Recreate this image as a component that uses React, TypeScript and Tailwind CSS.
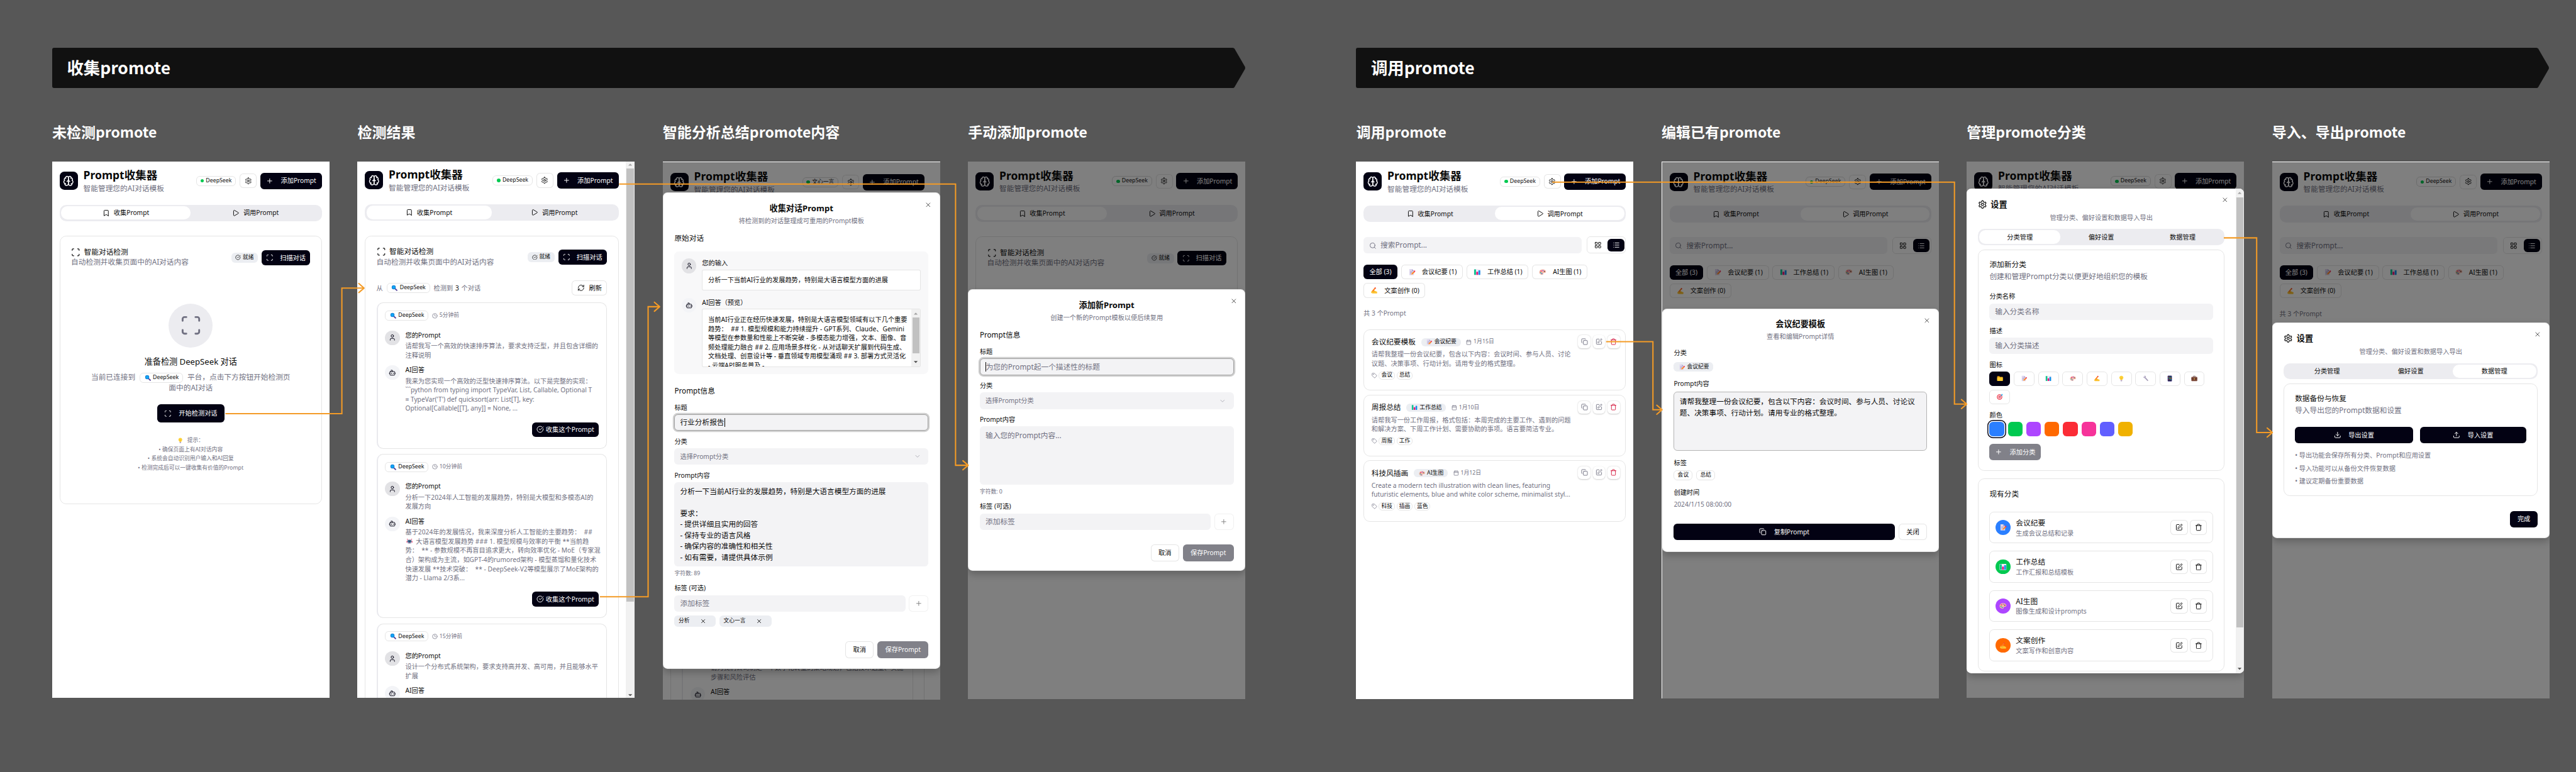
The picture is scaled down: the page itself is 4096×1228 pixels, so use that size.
import React from "react";
import {
  Bookmark,
  Bot,
  Calendar,
  ChevronDown,
  CircleCheckBig,
  Clock,
  Copy,
  Download,
  LayoutGrid,
  List,
  Play,
  Plus,
  RefreshCw,
  Scan,
  Search,
  SquarePen,
  Tag,
  Trash,
  Upload,
  User,
  X,
} from "lucide-react";

/* ---------- icons ---------- */

function BrainIcon({ className = "" }: { className?: string }) {
  return (
    <svg viewBox="0 0 24 24" fill="none" stroke="currentColor" strokeWidth="2" strokeLinecap="round" strokeLinejoin="round" className={className}>
      <path d="M12 5a3 3 0 1 0-5.997.125 4 4 0 0 0-2.526 5.77 4 4 0 0 0 .556 6.588A4 4 0 1 0 12 18Z" />
      <path d="M12 5a3 3 0 1 1 5.997.125 4 4 0 0 1 2.526 5.77 4 4 0 0 1-.556 6.588A4 4 0 1 1 12 18Z" />
      <path d="M15 13a4.5 4.5 0 0 1-3-4 4.5 4.5 0 0 1-3 4" />
      <path d="M17.599 6.5a3 3 0 0 0 .399-1.375" />
      <path d="M6.003 5.125A3 3 0 0 0 6.401 6.5" />
      <path d="M3.477 10.896a4 4 0 0 1 .585-.396" />
      <path d="M19.938 10.5a4 4 0 0 1 .585.396" />
      <path d="M6 18a4 4 0 0 1-1.967-.516" />
      <path d="M19.967 17.484A4 4 0 0 1 18 18" />
    </svg>
  );
}

function GearIcon({ className = "" }: { className?: string }) {
  return (
    <svg viewBox="0 0 24 24" fill="none" stroke="currentColor" strokeWidth="2" strokeLinecap="round" strokeLinejoin="round" className={className}>
      <path d="M12.22 2h-.44a2 2 0 0 0-2 2v.18a2 2 0 0 1-1 1.73l-.43.25a2 2 0 0 1-2 0l-.15-.08a2 2 0 0 0-2.73.73l-.22.38a2 2 0 0 0 .73 2.73l.15.1a2 2 0 0 1 1 1.72v.51a2 2 0 0 1-1 1.74l-.15.09a2 2 0 0 0-.73 2.73l.22.38a2 2 0 0 0 2.73.73l.15-.08a2 2 0 0 1 2 0l.43.25a2 2 0 0 1 1 1.73V20a2 2 0 0 0 2 2h.44a2 2 0 0 0 2-2v-.18a2 2 0 0 1 1-1.73l.43-.25a2 2 0 0 1 2 0l.15.08a2 2 0 0 0 2.73-.73l.22-.39a2 2 0 0 0-.73-2.73l-.15-.08a2 2 0 0 1-1-1.74v-.5a2 2 0 0 1 1-1.74l.15-.09a2 2 0 0 0 .73-2.73l-.22-.38a2 2 0 0 0-2.73-.73l-.15.08a2 2 0 0 1-2 0l-.43-.25a2 2 0 0 1-1-1.73V4a2 2 0 0 0-2-2z" />
      <circle cx="12" cy="12" r="3" />
    </svg>
  );
}

type EmojiName =
  | "magnifier"
  | "bulb"
  | "robot"
  | "memo"
  | "chart"
  | "palette"
  | "writing"
  | "folder"
  | "wrench"
  | "phone"
  | "briefcase"
  | "target";

const emojiArt: Record<EmojiName, React.ReactNode> = {
  magnifier: (
    <>
      <path d="M14 14l7 6.5" stroke="#5b4a9c" strokeWidth="4.6" strokeLinecap="round" />
      <circle cx="9.5" cy="9.5" r="7.6" fill="#1179cf" />
      <circle cx="9.5" cy="9.5" r="5.7" fill="#12a4f5" />
    </>
  ),
  bulb: (
    <>
      <path d="M12 1.5c-4.4 0-7.5 3.2-7.5 7.2 0 3.600 3 5.300 4 8.300h7c1-3 4-4.700 4-8.300 0-4-3.100-7.200-7.500-7.200z" fill="#fdd23a" />
      <path d="M9.500 9l2.500 2 2.500-2M12 11v6" stroke="#f0a81f" strokeWidth="1.300" fill="none" />
      <path d="M9 17.500h6v3.500c0 1-1 1.600-3 1.600s-3-.6-3-1.600z" fill="#b5a3c4" />
    </>
  ),
  robot: (
    <>
      <rect x="1" y="10" width="3" height="7" rx="1.500" fill="#f0315a" />
      <rect x="20" y="10" width="3" height="7" rx="1.500" fill="#f0315a" />
      <circle cx="4" cy="4" r="1.700" fill="#f0315a" />
      <circle cx="20" cy="4" r="1.700" fill="#f0315a" />
      <rect x="3.500" y="4.500" width="17" height="16" rx="5" fill="#b9b3cf" />
      <rect x="5" y="8.500" width="14" height="7" rx="3.500" fill="#1c2140" />
      <circle cx="9" cy="12" r="1.900" fill="#1fc3ef" />
      <circle cx="15" cy="12" r="1.900" fill="#1fc3ef" />
      <rect x="8" y="17" width="8" height="1.800" rx=".9" fill="#5a5480" />
    </>
  ),
  memo: (
    <>
      <path d="M4 2h9l6 6v14H4z" fill="#ded6ee" />
      <path d="M13 2l6 6h-6z" fill="#a99bc9" />
      <path d="M6.500 10h8M6.500 13.500h6M6.500 17h4" stroke="#9c8fb8" strokeWidth="1.300" />
      <path d="M9.500 20.500l1.200-4.200L18 9.300l3.400 3.400-7.200 7z" fill="#ff8a2b" />
      <path d="M18 9.300l2-1.900c1-.9 2.200-.7 3 .2s.7 2-.1 2.900l-1.900 2.200z" fill="#f0315a" />
      <path d="M9.500 20.500l1.200-4.200 3.500 3.400z" fill="#f7c9a0" />
    </>
  ),
  chart: (
    <>
      <rect x="1" y="2" width="22" height="20" rx="1.500" fill="#efeaf7" />
      <rect x="2" y="3" width="6" height="18" rx=".8" fill="#0fc58e" />
      <rect x="9" y="11" width="6" height="10" rx=".8" fill="#ee1478" />
      <rect x="16" y="6" width="6" height="15" rx=".8" fill="#1591e8" />
    </>
  ),
  palette: (
    <>
      <path d="M12 3C5.700 3 1 7 1 12.300c0 5 4.300 8.700 10 8.700 2.600 0 3.400-1.400 3-3-.5-2 .6-3.300 2.700-3.200 3.400.2 6.300-.8 6.300-4.400C23 6 18 3 12 3z" fill="#f7b9a8" />
      <circle cx="7" cy="8.500" r="2" fill="#ed2466" />
      <circle cx="5.500" cy="13.500" r="1.900" fill="#12b28c" />
      <circle cx="9.500" cy="17" r="1.900" fill="#1a7fe0" />
      <circle cx="13" cy="6.800" r="1.900" fill="#8b4ae0" />
      <circle cx="18" cy="9.500" r="1.900" fill="#5c3b34" />
    </>
  ),
  writing: (
    <>
      <path d="M2.500 17.500c1-3 4-6 7-5.500l4 1 8 3.500c1.700.9 1.200 2.700-.6 2.700l1 .2c1 1.700-.3 2.700-2 2.600H8c-3.500 0-6.500-1.700-5.500-4.500z" fill="#fdc432" />
      <path d="M5.500 16.500L7 12 15.200 1.800l3.200 2.600L10 14.500z" fill="#ff7a1f" />
      <path d="M15.200 1.800l3.200 2.600-1.400 1.700-3.200-2.600z" fill="#e8304a" />
      <path d="M8 17c2.500.5 5-.5 6.500-2.500" stroke="#e89a17" strokeWidth="1.400" fill="none" />
    </>
  ),
  folder: (
    <>
      <path d="M1.500 4.500C1.500 3.700 2 3 3 3h6.500L12 6h9c1 0 1.500.6 1.500 1.500V20H1.500z" fill="#e39a12" />
      <rect x="1.500" y="7.500" width="21" height="13.500" rx="1.500" fill="#fdc92f" />
    </>
  ),
  wrench: (
    <>
      <path d="M7 7l11.500 12" stroke="#a79fb8" strokeWidth="4.200" strokeLinecap="round" />
      <path d="M2 5.500l3.500 1 2-2L6.200 1.300c4-.8 6.800 2.400 5.600 5.800-1 3.200-5 4.200-7.600 2.500C2.700 8.600 2 7.200 2 5.500z" fill="#b8b0c8" />
    </>
  ),
  phone: (
    <>
      <rect x="4" y="1" width="16" height="22" rx="2.500" fill="#4b3f8a" />
      <rect x="5.500" y="3" width="13" height="17.500" rx="1" fill="#1c1b3a" />
      {[5, 9.500, 14].map((y, r) => (
        <g key={y}>
          <rect x="6.800" y={y} width="2.900" height="3" rx=".6" fill={["#ff8a2b", "#1fc3ef", "#f0315a"][r]} />
          <rect x="10.600" y={y} width="2.900" height="3" rx=".6" fill={["#1a7fe0", "#fdc432", "#12b28c"][r]} />
          <rect x="14.400" y={y} width="2.900" height="3" rx=".6" fill={["#12b28c", "#ff8a2b", "#1fc3ef"][r]} />
        </g>
      ))}
    </>
  ),
  briefcase: (
    <>
      <path d="M8 6V4.500C8 3.500 8.600 3 9.500 3h5c.9 0 1.500.5 1.500 1.500V6" stroke="#4a2c28" strokeWidth="1.800" fill="none" />
      <rect x="1" y="6" width="22" height="15.500" rx="2" fill="#7d4a3a" />
      <path d="M1 12h22v2c-6 2-16 2-22 0z" fill="#5c332b" />
      <rect x="10" y="11.500" width="4" height="3.500" rx=".8" fill="#f5c03a" />
    </>
  ),
  target: (
    <>
      <circle cx="10.500" cy="13" r="10" fill="#ee3346" />
      <circle cx="10.500" cy="13" r="7.200" fill="#fff" />
      <circle cx="10.500" cy="13" r="4.700" fill="#ee3346" />
      <circle cx="10.500" cy="13" r="2" fill="#fff" />
      <path d="M10.500 13l8-7.500" stroke="#2b6cb5" strokeWidth="1.600" />
      <path d="M16 8l.4-4L20 .8l.6 2.700 2.900.5L20 7.600z" fill="#35b6ef" />
    </>
  ),
};

function Emoji({ name, className = "size-4" }: { name: EmojiName; className?: string }) {
  return (
    <svg viewBox="0 0 24 24" fill="none" className={"shrink-0 " + className}>
      {emojiArt[name]}
    </svg>
  );
}

/* ---------- small parts ---------- */

function EmojiBadge({ emoji, children, outline = false }: { emoji: EmojiName; children: React.ReactNode; outline?: boolean }) {
  return (
    <span
      className={
        "inline-flex shrink-0 items-center rounded-lg border pr-2 pl-[9px] text-xs leading-4 text-[#0a0a0a] " +
        (outline ? "h-[22px] border-black/10" : "h-[18px] border-transparent bg-[#eceef2]")
      }
    >
      <Emoji name={emoji} className="mr-[4.500px] size-[14px]" />
      {children}
    </span>
  );
}

function PrimaryButton({ className = "", children }: { className?: string; children: React.ReactNode }) {
  return (
    <button className={"flex shrink-0 items-center justify-center rounded-lg bg-[#030213] text-sm text-white " + className}>{children}</button>
  );
}

function OutlineButton({ className = "", children }: { className?: string; children: React.ReactNode }) {
  return (
    <button className={"flex shrink-0 items-center justify-center rounded-lg border border-black/10 bg-white text-sm text-[#0a0a0a] " + className}>
      {children}
    </button>
  );
}

function AppHeader({ platform = "DeepSeek", tab, dim = false }: { platform?: string; tab: "collect" | "use"; dim?: boolean }) {
  const on = "bg-white";
  return (
    <header className="px-4">
      <div className="flex h-14 items-center">
        <div className="flex size-10 items-center justify-center rounded-[10px] bg-[#030213] text-white">
          <BrainIcon className="size-6" />
        </div>
        <div className="ml-3">
          <h1 className="text-2xl leading-8 font-bold whitespace-nowrap">Prompt收集器</h1>
          <p className="text-base leading-6 whitespace-nowrap text-[#717182]">智能管理您的AI对话模板</p>
        </div>
        <div className="ml-auto flex items-center gap-2">
          <span className={"flex h-[22px] items-center gap-1 rounded-lg border px-2 text-xs " + (dim ? "border-black/15" : "border-black/10")}>
            <i className="h-[7.500px] w-2 rounded-full bg-[#00c950]" />
            {platform}
          </span>
          <OutlineButton className="h-8 w-[37px]">
            <GearIcon className="size-4" />
          </OutlineButton>
          <PrimaryButton className="h-[35.500px] w-[134px] gap-4">
            <Plus className="size-4" />
            添加Prompt
          </PrimaryButton>
        </div>
      </div>
      <div className="mt-6 flex h-9 rounded-[14px] bg-[#ececf0] p-[3.500px] text-sm">
        <div className={"flex flex-1 items-center justify-center gap-2 rounded-[14px] " + (tab === "collect" ? on : "")}>
          <Bookmark className="size-4" />
          收集Prompt
        </div>
        <div className={"flex flex-1 items-center justify-center gap-2 rounded-[14px] " + (tab === "use" ? on : "")}>
          <Play className="size-4" />
          调用Prompt
        </div>
      </div>
    </header>
  );
}

function DetectHeader() {
  return (
    <div className="flex items-center justify-between">
      <div>
        <div className="flex h-5 items-center gap-2 text-base leading-5">
          <Scan className="size-5" />
          智能对话检测
        </div>
        <p className="text-base leading-6 whitespace-nowrap text-[#717182]">自动检测并收集页面中的AI对话内容</p>
      </div>
      <div className="flex items-center gap-2">
        <span className="flex h-[22px] items-center gap-1 rounded-lg bg-[#eceef2] px-[9px] text-xs">
          <CircleCheckBig className="size-3" />
          就绪
        </span>
        <PrimaryButton className="h-8 w-[106px] gap-[14px]">
          <Scan className="size-4" />
          扫描对话
        </PrimaryButton>
      </div>
    </div>
  );
}

function Avatar({ kind }: { kind: "user" | "bot" }) {
  return (
    <span
      className={
        "flex size-8 shrink-0 items-center justify-center rounded-full text-[#030213] " + (kind === "user" ? "bg-[#e2e2e5]" : "bg-[#f3f4f7]")
      }
    >
      {kind === "user" ? <User className="size-4" /> : <Bot className="size-4" />}
    </span>
  );
}

function Lines({ lines }: { lines: React.ReactNode[] }) {
  return (
    <>
      {lines.map((l, i) => (
        <div key={i} className="whitespace-pre">
          {l}
        </div>
      ))}
    </>
  );
}

function Conversation({ time, prompt, answer }: { time: string; prompt: string[]; answer: React.ReactNode[] }) {
  return (
    <article className="rounded-[14px] border border-l-4 border-black/10 border-l-[#e9e9ee] bg-white px-4 pt-4 pb-6">
      <div className="flex h-[22px] items-center gap-2 text-xs text-[#717182]">
        <EmojiBadge emoji="magnifier" outline>
          DeepSeek
        </EmojiBadge>
        <span className="flex items-center gap-1">
          <Clock className="size-3" />
          {time}
        </span>
      </div>
      <div className="mt-[21px] flex gap-3 text-sm">
        <Avatar kind="user" />
        <div>
          <div>您的Prompt</div>
          <div className="mt-1 text-[#717182]">
            <Lines lines={prompt} />
          </div>
        </div>
      </div>
      <div className="mt-3 flex gap-3 text-sm">
        <Avatar kind="bot" />
        <div>
          <div>AI回答</div>
          <div className="mt-1 text-[#717182]">
            <Lines lines={answer} />
          </div>
        </div>
      </div>
      <div className="mt-5 flex justify-end">
        <PrimaryButton className="h-8 w-[146px] gap-1">
          <CircleCheckBig className="size-4" />
          收集这个Prompt
        </PrimaryButton>
      </div>
    </article>
  );
}

function ScrollArrow({ dir, className = "" }: { dir: "up" | "down"; className?: string }) {
  return (
    <svg viewBox="0 0 10 6" className={"w-[8.500px] " + className}>
      {dir === "up" ? <path d="M5 0.500L10 5.500H0z" fill="#a3a3a3" /> : <path d="M5 5.500L0 .5h10z" fill="#505050" />}
    </svg>
  );
}

/* ---------- frame of one screen ---------- */

function Screen({
  title,
  className,
  overlay = false,
  children,
  dialog,
}: {
  title: string;
  className: string;
  overlay?: boolean;
  children: React.ReactNode;
  dialog?: React.ReactNode;
}) {
  return (
    <div className="w-[440.700px] shrink-0">
      <h2 className="flex h-[36px] items-center text-[23px] leading-none font-bold whitespace-nowrap text-white font-['Noto_Sans_CJK_SC','Noto_Sans',sans-serif]">
        {title}
      </h2>
      <div className="mt-[40.400px] [zoom:0.7309]">
        <div className={"relative flex w-[603px] flex-col overflow-hidden bg-white text-[#0a0a0a] " + className}>
          {children}
          {overlay && <div className="absolute inset-0 bg-black/50" />}
          {dialog}
        </div>
      </div>
    </div>
  );
}

function Dialog({ className, children }: { className: string; children: React.ReactNode }) {
  return (
    <div
      className={
        "absolute left-0 w-full overflow-hidden rounded-[10px] border border-black/10 bg-white px-6 pt-6 shadow-[0_8px_16px_rgba(0,0,0,0.22)] " + className
      }
    >
      {children}
    </div>
  );
}

function DialogTitle({ title, text }: { title: string; text: string }) {
  return (
    <>
      <X className="absolute top-[16.500px] right-4 size-4 opacity-70" />
      <div className="text-center text-lg leading-[18px] font-bold">{title}</div>
      <p className="mt-2 text-center text-sm leading-5 text-[#717182]">{text}</p>
    </>
  );
}

/* ---------- form shared by both prompt dialogs ---------- */

function FormLabel({ children, className = "mt-4" }: { children: React.ReactNode; className?: string }) {
  return <div className={"text-sm leading-[14px] " + className}>{children}</div>;
}

function PromptForm({
  titleField,
  content,
  contentHeight,
  count,
  tags,
}: {
  titleField: React.ReactNode;
  content: React.ReactNode;
  contentHeight: string;
  count: number;
  tags?: string[];
}) {
  return (
    <>
      <div className="text-base leading-6">Prompt信息</div>
      <FormLabel className="mt-[17px]">标题</FormLabel>
      <div className="mt-2 flex h-9 items-center rounded-lg border border-[#a1a1a1] bg-[#f3f3f5] px-[11px] text-base leading-6 ring-[3px] ring-[#d0d0d0]">
        {titleField}
      </div>
      <FormLabel>分类</FormLabel>
      <div className="mt-2 flex h-9 items-center justify-between rounded-lg bg-[#f3f3f5] pr-3 pl-[12.500px] text-sm text-[#717182]">
        选择Prompt分类
        <ChevronDown className="mr-1 size-4 opacity-50" />
      </div>
      <FormLabel>Prompt内容</FormLabel>
      <div className={"mt-2 rounded-lg bg-[#f3f3f5] px-[12.500px] pt-2 text-base leading-6 " + contentHeight}>{content}</div>
      <div className="mt-2 text-xs leading-4 text-[#717182]">字符数: {count}</div>
      <FormLabel>标签 (可选)</FormLabel>
      <div className="mt-2 flex gap-2">
        <div className="flex h-9 flex-1 items-center rounded-lg bg-[#f3f3f5] px-[12.500px] text-base leading-6 text-[#717182]">添加标签</div>
        <OutlineButton className="h-9 w-[42px] opacity-50">
          <Plus className="size-4" />
        </OutlineButton>
      </div>
      {tags && (
        <div className="mt-2 flex gap-2">
          {tags.map((t) => (
            <span key={t} className="flex h-[25px] items-center rounded-lg bg-[#eceef2] pr-5 pl-[9px] text-xs">
              {t}
              <X className="ml-[23px] size-[14px]" />
            </span>
          ))}
        </div>
      )}
      <div className="mt-8 flex justify-end gap-2">
        <OutlineButton className="h-9 w-[62px]">取消</OutlineButton>
        <button className="h-9 w-[110.500px] rounded-lg bg-[#818189] text-sm text-white">保存Prompt</button>
      </div>
    </>
  );
}

/* ---------- library view (search, filters, cards) ---------- */

const filters: { emoji: EmojiName; label: string }[] = [
  { emoji: "memo", label: "会议纪要 (1)" },
  { emoji: "chart", label: "工作总结 (1)" },
  { emoji: "palette", label: "AI生图 (1)" },
  { emoji: "writing", label: "文案创作 (0)" },
];

function LibraryTop() {
  return (
    <div className="px-4 pt-8">
      <div className="flex h-[37px] items-center justify-between">
        <div className="flex h-9 w-[474px] items-center rounded-lg bg-[#f3f3f5] pl-3 text-base text-[#717182]">
          <Search className="mt-[2px] mr-[9px] size-4" />
          搜索Prompt...
        </div>
        <div className="flex h-[37px] w-[85px] items-center rounded-lg border border-black/10 pl-1">
          <span className="flex h-7 w-[36px] items-center justify-center">
            <LayoutGrid className="size-4" />
          </span>
          <PrimaryButton className="ml-1 h-7 w-[36px]">
            <List className="size-4" />
          </PrimaryButton>
        </div>
      </div>
      <div className="mt-6 flex flex-wrap gap-x-2 gap-y-[8.500px]">
        <PrimaryButton className="h-8 w-[73.500px]">全部 (3)</PrimaryButton>
        {filters.map((f) => (
          <OutlineButton key={f.label} className="h-8 px-3">
            <Emoji name={f.emoji} className="mr-[14px] ml-[2px] size-4" />
            {f.label}
          </OutlineButton>
        ))}
      </div>
      <div className="mt-6 text-sm text-[#717182]">共 3 个Prompt</div>
    </div>
  );
}

const prompts: { name: string; emoji: EmojiName; cat: string; date: string; lines: string[]; tags: string[] }[] = [
  {
    name: "会议纪要模板",
    emoji: "memo",
    cat: "会议纪要",
    date: "1月15日",
    lines: ["请帮我整理一份会议纪要，包含以下内容：会议时间、参与人员、讨论", "议题、决策事项、行动计划。请用专业的格式整理。"],
    tags: ["会议", "总结"],
  },
  {
    name: "周报总结",
    emoji: "chart",
    cat: "工作总结",
    date: "1月10日",
    lines: ["请帮我写一份工作周报，格式包括：本周完成的主要工作、遇到的问题", "和解决方案、下周工作计划、需要协助的事项。语言要简洁专业。"],
    tags: ["周报", "工作"],
  },
  {
    name: "科技风插画",
    emoji: "palette",
    cat: "AI生图",
    date: "1月12日",
    lines: ["Create a modern tech illustration with clean lines, featuring", "futuristic elements, blue and white color scheme, minimalist styl..."],
    tags: ["科技", "插画", "蓝色"],
  },
];

function IconChip({ children, className = "text-[#717182]" }: { children: React.ReactNode; className?: string }) {
  return (
    <span className={"flex h-7 w-[27px] items-center justify-center rounded-lg bg-white shadow-[0_1px_3px_rgba(0,0,0,0.22)] " + className}>
      {children}
    </span>
  );
}

function PromptCard({ p }: { p: (typeof prompts)[number] }) {
  return (
    <article className="relative h-[134px] rounded-[14px] border border-black/10 px-4 pt-4">
      <div className="flex h-[22px] items-center gap-3">
        <span className="text-base leading-[22px]">{p.name}</span>
        <EmojiBadge emoji={p.emoji}>{p.cat}</EmojiBadge>
        <span className="flex items-center gap-1 text-xs text-[#717182]">
          <Calendar className="size-3" />
          {p.date}
        </span>
      </div>
      <div className="mt-[5.500px] text-sm text-[#717182]">
        <Lines lines={p.lines} />
      </div>
      <div className="mt-[7px] flex h-[18px] items-center gap-1 text-xs">
        <Tag className="size-3 text-[#717182]" />
        {p.tags.map((t) => (
          <span key={t} className="flex h-[17.500px] items-center rounded-lg border border-black/10 px-1">
            {t}
          </span>
        ))}
      </div>
      <div className="absolute top-3 right-3 flex gap-[5px]">
        <IconChip>
          <Copy className="size-[15px]" />
        </IconChip>
        <IconChip>
          <SquarePen className="size-[15px]" />
        </IconChip>
        <IconChip className="text-[#d4183d]">
          <Trash className="size-[15px]" />
        </IconChip>
      </div>
    </article>
  );
}

/* ---------- settings dialog parts ---------- */

function SettingsTop({ active }: { active: number }) {
  return (
    <>
      <X className="absolute top-[16.500px] right-4 size-4 opacity-70" />
      <div className="flex h-5 items-center gap-2 text-lg leading-5 font-bold">
        <GearIcon className="size-5" />
        设置
      </div>
      <p className="mt-[9px] text-center text-sm leading-5 text-[#717182]">管理分类、偏好设置和数据导入导出</p>
      <div className="mt-[14.500px] flex h-[35.500px] rounded-[14px] bg-[#ececf0] p-[3px] text-sm">
        {["分类管理", "偏好设置", "数据管理"].map((t, i) => (
          <div key={t} className={"flex flex-1 items-center justify-center rounded-[14px] " + (i === active ? "bg-white" : "")}>
            {t}
          </div>
        ))}
      </div>
    </>
  );
}

const categories: { emoji: EmojiName; name: string; desc: string; color: string }[] = [
  { emoji: "memo", name: "会议纪要", desc: "生成会议总结和记录", color: "bg-[#2b7fff]" },
  { emoji: "chart", name: "工作总结", desc: "工作汇报和总结模板", color: "bg-[#00c950]" },
  { emoji: "palette", name: "AI生图", desc: "图像生成和设计prompts", color: "bg-[#ad46ff]" },
  { emoji: "writing", name: "文案创作", desc: "文案写作和创意内容", color: "bg-[#ff6900]" },
];

const iconChoices: EmojiName[] = ["folder", "memo", "chart", "palette", "writing", "bulb", "wrench", "phone", "briefcase", "target"];

const swatches = [
  "bg-[#2b7fff] ring-2 ring-[#030213] ring-offset-2",
  "bg-[#00c950]",
  "bg-[#ad46ff]",
  "bg-[#ff6900]",
  "bg-[#fb2c36]",
  "bg-[#f6339a]",
  "bg-[#615fff]",
  "bg-[#f0b100]",
];

/* ---------- screens ---------- */

function IdleScreen() {
  return (
    <Screen title="未检测promote" className="h-[1168px] pt-[14.500px]">
      <AppHeader tab="collect" />
      <section className="mx-4 mt-8 h-[584px] rounded-[14px] border border-black/10 p-6">
        <DetectHeader />
        <div className="flex flex-col items-center pt-[78px]">
          <div className="flex size-24 items-center justify-center rounded-full bg-[#ececf0] text-[#717182]">
            <Scan className="size-12" />
          </div>
          <div className="mt-4 text-lg leading-7">准备检测 DeepSeek 对话</div>
          <div className="mt-[7px] flex items-center text-base leading-6 text-[#717182]">
            <span>当前已连接到</span>
            <span className="mx-[9.500px] mt-1 flex">
              <EmojiBadge emoji="magnifier" outline>
                DeepSeek
              </EmojiBadge>
            </span>
            <span>平台，点击下方按钮开始检测页</span>
          </div>
          <div className="-mt-[2px] text-base leading-6 text-[#717182]">面中的AI对话</div>
          <PrimaryButton className="mt-6 h-10 w-[147px] gap-4">
            <Scan className="size-4" />
            开始检测对话
          </PrimaryButton>
          <div className="mt-[31px] flex flex-col items-center gap-[4.200px] text-xs leading-4 text-[#717182]">
            <span className="flex items-center gap-2">
              <Emoji name="bulb" className="size-[13px]" />
              提示：
            </span>
            <span>• 确保页面上有AI对话内容</span>
            <span>• 系统会自动识别用户输入和AI回复</span>
            <span>• 检测完成后可以一键收集有价值的Prompt</span>
          </div>
        </div>
      </section>
    </Screen>
  );
}

function ResultScreen() {
  return (
    <Screen title="检测结果" className="h-[1168px]">
      <div className="flex h-full">
        <div className="h-full w-[584px] shrink-0 overflow-hidden pt-[13.500px]">
          <AppHeader tab="collect" />
          <section className="mx-4 mt-8 h-[1300px] rounded-[14px] border border-black/10 p-6">
            <DetectHeader />
            <div className="mt-[29px] flex h-8 items-center gap-2 text-sm text-[#717182]">
              从
              <EmojiBadge emoji="magnifier" outline>
                DeepSeek
              </EmojiBadge>
              <span>
                检测到 <span className="mx-[1.500px] text-[#0a0a0a]">3</span> 个对话
              </span>
              <OutlineButton className="ml-auto h-8 w-[76px] gap-[10px]">
                <RefreshCw className="size-4" />
                刷新
              </OutlineButton>
            </div>
            <div className="mt-4 flex flex-col gap-[11.500px]">
              <Conversation
                time="5分钟前"
                prompt={["请帮我写一个高效的快速排序算法，要求支持泛型，并且包含详细的", "注释说明"]}
                answer={[
                  "我来为您实现一个高效的泛型快速排序算法。以下是完整的实现：",
                  "```python from typing import TypeVar, List, Callable, Optional T",
                  "= TypeVar('T') def quicksort(arr: List[T], key:",
                  "Optional[Callable[[T], any]] = None, ...",
                ]}
              />
              <Conversation
                time="10分钟前"
                prompt={["分析一下2024年人工智能的发展趋势，特别是大模型和多模态AI的", "发展方向"]}
                answer={[
                  "基于2024年的发展情况，我来深度分析人工智能的主要趋势：  ##",
                  <span key="r" className="flex items-center">
                    <Emoji name="robot" className="mr-[7px] ml-[2px] size-[14px]" />
                    大语言模型发展趋势 ### 1. 模型规模与效率的平衡 **当前趋
                  </span>,
                  "势：  ** - 参数规模不再盲目追求更大，转向效率优化 - MoE（专家混",
                  "合）架构成为主流，如GPT-4的rumored架构 - 模型蒸馏和量化技术",
                  "快速发展 **技术突破：  ** - DeepSeek-V2等模型展示了MoE架构的",
                  "潜力 - Llama 2/3系...",
                ]}
              />
              <Conversation
                time="15分钟前"
                prompt={["设计一个分布式系统架构，要求支持高并发、高可用，并且能够水平", "扩展"]}
                answer={["", "", "", ""]}
              />
            </div>
          </section>
        </div>
        <div className="flex w-[19px] flex-col items-center bg-[#f1f1f1] pt-[5px] pb-1">
          <ScrollArrow dir="up" />
          <div className="mt-[6px] h-[942px] w-4 bg-[#c1c1c1]" />
          <ScrollArrow dir="down" className="mt-auto" />
        </div>
      </div>
    </Screen>
  );
}

function AnalyzeScreen() {
  return (
    <Screen
      title="智能分析总结promote内容"
      className="h-[1172.500px] border-t-2 border-white pt-[16px]"
      overlay
      dialog={
        <Dialog className="top-[67px] h-[1037px]">
          <DialogTitle title="收集对话Prompt" text="将检测到的对话整理成可重用的Prompt模板" />
          <div className="mt-4 text-base leading-6">原始对话</div>
          <div className="mt-4 mb-6 h-[267.500px] rounded-[10px] bg-[#f8f8f9] p-4 text-sm">
            <div className="flex gap-3">
              <Avatar kind="user" />
              <div className="flex-1">
                <div>您的输入</div>
                <div className="mt-1 flex h-[45.500px] items-center rounded-[4px] border border-black/10 bg-white pl-3">
                  分析一下当前AI行业的发展趋势，特别是大语言模型方面的进展
                </div>
              </div>
            </div>
            <div className="mt-4 flex gap-3">
              <Avatar kind="bot" />
              <div className="flex-1">
                <div>AI回答（预览）</div>
                <div className="mt-1 flex h-[127px] justify-between overflow-hidden rounded-[4px] border border-black/10 bg-white pl-3">
                  <div className="pt-3">
                    <Lines
                      lines={[
                        "当前AI行业正在经历快速发展，特别是大语言模型领域有以下几个重要",
                        "趋势：  ## 1. 模型规模和能力持续提升 - GPT系列、Claude、Gemini",
                        "等模型在参数量和性能上不断突破 - 多模态能力增强，文本、图像、音",
                        "频处理能力融合 ## 2. 应用场景多样化 - 从对话聊天扩展到代码生成、",
                        "文档处理、创意设计等 - 垂直领域专用模型涌现 ## 3. 部署方式灵活化",
                        "- 云端API服务普及 - ...",
                      ]}
                    />
                  </div>
                  <div className="flex w-[19px] shrink-0 flex-col items-center bg-[#f1f1f1] pt-[7px] pb-[7px]">
                    <ScrollArrow dir="up" />
                    <div className="mt-[6px] h-[78px] w-4 bg-[#c1c1c1]" />
                    <ScrollArrow dir="down" className="mt-auto" />
                  </div>
                </div>
              </div>
            </div>
          </div>
          <PromptForm
            titleField={
              <>
                行业分析报告
                <i className="h-5 w-px bg-black" />
              </>
            }
            content={
              <Lines
                lines={[
                  "分析一下当前AI行业的发展趋势，特别是大语言模型方面的进展",
                  " ",
                  "要求：",
                  "- 提供详细且实用的回答",
                  "- 保持专业的语言风格",
                  "- 确保内容的准确性和相关性",
                  "- 如有需要，请提供具体示例",
                ]}
              />
            }
            contentHeight="h-[184px]"
            count={89}
            tags={["分析", "文心一言"]}
          />
        </Dialog>
      }
    >
      <div className="w-[585px]">
        <AppHeader tab="collect" platform="文心一言" dim />
      </div>
      <div className="mt-auto ml-4 w-[553px] border-x border-black/10">
        <div className="ml-6 w-[503px] border-x border-l-4 border-black/10 border-l-[#ececf0] pl-4 text-sm text-[#717182]">
          <div className="ml-11 whitespace-nowrap">
            请为我们公司制定一个数字化转型的策略规划，包括技术选型、实施
            <br />
            步骤和风险评估
          </div>
          <div className="mt-3 flex h-[28px] gap-3 text-[#0a0a0a]">
            <Avatar kind="bot" />
            AI回答
          </div>
        </div>
      </div>
    </Screen>
  );
}

function AddScreen() {
  return (
    <Screen
      title="手动添加promote"
      className="h-[1170px] pt-[15.500px]"
      overlay
      dialog={
        <Dialog className="top-[279px] h-[613px]">
          <DialogTitle title="添加新Prompt" text="创建一个新的Prompt模板以便后续复用" />
          <div className="mt-4">
            <PromptForm
              titleField={
                <>
                  <i className="h-5 w-px bg-black" />
                  <span className="text-[#717182]">为您的Prompt起一个描述性的标题</span>
                </>
              }
              content={<span className="text-[#717182]">输入您的Prompt内容...</span>}
              contentHeight="h-[127px]"
              count={0}
            />
          </div>
        </Dialog>
      }
    >
      <AppHeader tab="collect" dim />
      <section className="mx-4 mt-8 h-[584px] rounded-[14px] border border-black/10 p-6">
        <DetectHeader />
      </section>
    </Screen>
  );
}

function LibraryScreen() {
  return (
    <Screen title="调用promote" className="h-[1170px] pt-4">
      <AppHeader tab="use" />
      <LibraryTop />
      <div className="mx-4 mt-6 flex flex-col gap-[8.600px]">
        {prompts.map((p) => (
          <PromptCard key={p.name} p={p} />
        ))}
      </div>
    </Screen>
  );
}

function EditScreen() {
  return (
    <Screen
      title="编辑已有promote"
      className="h-[1169px] border-t-2 border-l border-white pt-[15.500px]"
      overlay
      dialog={
        <Dialog className="top-[319px] h-[530px]">
          <DialogTitle title="会议纪要模板" text="查看和编辑Prompt详情" />
          <FormLabel className="mt-[18px]">分类</FormLabel>
          <div className="mt-[14px] flex h-5 w-[85px] items-center rounded-lg bg-[#eceef2]">
            <EmojiBadge emoji="memo">会议纪要</EmojiBadge>
          </div>
          <FormLabel className="mt-[19px]">Prompt内容</FormLabel>
          <div className="mt-[11px] h-[128px] rounded-lg border-[1.500px] border-[#b4b4b4] bg-[#f3f3f5] px-[11.500px] pt-[8px] text-base leading-6">
            <Lines lines={["请帮我整理一份会议纪要，包含以下内容：会议时间、参与人员、讨论议", "题、决策事项、行动计划。请用专业的格式整理。"]} />
          </div>
          <FormLabel className="mt-[19px]">标签</FormLabel>
          <div className="mt-[9.500px] flex gap-2 text-xs">
            {["会议", "总结"].map((t) => (
              <span key={t} className="flex h-[22px] w-[41px] items-center justify-center rounded-lg border border-black/10">
                {t}
              </span>
            ))}
          </div>
          <FormLabel className="mt-[19px]">创建时间</FormLabel>
          <div className="mt-[10px] text-sm leading-5 text-[#717182]">2024/1/15 08:00:00</div>
          <div className="mt-[32px] flex gap-2">
            <PrimaryButton className="h-[35.500px] flex-1 gap-4">
              <Copy className="size-4" />
              复制Prompt
            </PrimaryButton>
            <OutlineButton className="h-[35.500px] w-[62px]">关闭</OutlineButton>
          </div>
        </Dialog>
      }
    >
      <AppHeader tab="use" dim />
      <LibraryTop />
    </Screen>
  );
}

function CategoryScreen() {
  return (
    <Screen
      title="管理promote分类"
      className="h-[1168px] pt-[15.500px]"
      overlay
      dialog={
        <div className="absolute top-[59px] left-0 flex h-[1055px] w-full overflow-hidden rounded-[10px] bg-white shadow-[0_8px_16px_rgba(0,0,0,0.22)]">
          <div className="relative w-[585px] shrink-0 px-6 pt-[25px]">
            <SettingsTop active={0} />
            <section className="mt-[9px] h-[482px] rounded-[14px] border border-black/10 px-6 pt-6 text-sm">
              <div className="-mt-[4px] text-base leading-6">添加新分类</div>
              <div className="mt-[2px] text-base leading-6 text-[#717182]">创建和管理Prompt分类以便更好地组织您的模板</div>
              <FormLabel className="mt-[24px]">分类名称</FormLabel>
              <div className="mt-2 flex h-9 items-center rounded-lg bg-[#f3f3f5] px-3 text-base text-[#717182]">输入分类名称</div>
              <FormLabel>描述</FormLabel>
              <div className="mt-2 flex h-9 items-center rounded-lg bg-[#f3f3f5] px-3 text-base text-[#717182]">输入分类描述</div>
              <FormLabel>图标</FormLabel>
              <div className="mt-2 flex flex-wrap gap-2">
                {iconChoices.map((n, i) => (
                  <span
                    key={n}
                    className={
                      "flex h-8 w-[44.900px] items-center justify-center rounded-lg border " +
                      (i === 0 ? "border-[#030213] bg-[#030213]" : "border-black/10")
                    }
                  >
                    <Emoji name={n} className="size-[14px]" />
                  </span>
                ))}
              </div>
              <FormLabel>颜色</FormLabel>
              <div className="mt-2 flex gap-2">
                {swatches.map((s) => (
                  <span key={s} className={"size-8 rounded-lg " + s} />
                ))}
              </div>
              <button className="mt-4 flex h-9 w-[112px] items-center justify-center gap-4 rounded-lg bg-[#818189] text-sm text-white">
                <Plus className="size-4" />
                添加分类
              </button>
            </section>
            <section className="mt-4 h-[421px] rounded-[14px] border border-black/10 px-6 pt-[21px]">
              <div className="text-base leading-6">现有分类</div>
              <div className="mt-[26px] flex flex-col gap-[16px]">
                {categories.map((c) => (
                  <div key={c.name} className="flex h-[69.500px] items-center rounded-[10px] border border-black/10 px-3">
                    <span className={"flex size-8 items-center justify-center rounded-full " + c.color}>
                      <Emoji name={c.emoji} className="size-4" />
                    </span>
                    <div className="ml-3">
                      <div className="text-base leading-6">{c.name}</div>
                      <div className="text-sm leading-5 text-[#717182]">{c.desc}</div>
                    </div>
                    <OutlineButton className="ml-auto h-8 w-[37.500px]">
                      <SquarePen className="size-4" />
                    </OutlineButton>
                    <OutlineButton className="ml-1 h-8 w-[37.500px]">
                      <Trash className="size-4" />
                    </OutlineButton>
                  </div>
                ))}
              </div>
            </section>
          </div>
          <div className="flex flex-1 flex-col items-center bg-[#f1f1f1] pt-[8px] pb-[7px]">
            <ScrollArrow dir="up" />
            <div className="mt-[6px] h-[936px] w-4 bg-[#c1c1c1]" />
            <ScrollArrow dir="down" className="mt-auto" />
          </div>
        </div>
      }
    >
      <AppHeader tab="use" dim />
    </Screen>
  );
}

function BackupScreen() {
  return (
    <Screen
      title="导入、导出promote"
      className="h-[1169px] border-t-2 border-white pt-[15.500px]"
      overlay
      dialog={
        <Dialog className="top-[349px] h-[470px]">
          <SettingsTop active={2} />
          <section className="mt-[8.500px] h-[246px] rounded-[14px] border border-black/10 px-[23px] pt-[20px] text-[#717182]">
            <div className="text-base leading-6 text-[#0a0a0a]">数据备份与恢复</div>
            <div className="mt-[2px] text-base leading-6">导入导出您的Prompt数据和设置</div>
            <div className="mt-6 flex gap-[15px]">
              <PrimaryButton className="h-[35.500px] w-[256.500px] gap-4">
                <Download className="size-4" />
                导出设置
              </PrimaryButton>
              <PrimaryButton className="h-[35.500px] flex-1 gap-4">
                <Upload className="size-4" />
                导入设置
              </PrimaryButton>
            </div>
            <div className="mt-[16px] flex flex-col gap-[8.300px] text-sm">
              <div>• 导出功能会保存所有分类、Prompt和应用设置</div>
              <div>• 导入功能可以从备份文件恢复数据</div>
              <div>• 建议定期备份重要数据</div>
            </div>
          </section>
          <div className="mt-[32px] flex justify-end">
            <PrimaryButton className="h-[35.500px] w-[60px]">完成</PrimaryButton>
          </div>
        </Dialog>
      }
    >
      <AppHeader tab="use" dim />
      <LibraryTop />
    </Screen>
  );
}

/* ---------- board ---------- */

function Flow({ title, children }: { title: string; children: React.ReactNode }) {
  return (
    <section className="w-[1897px] shrink-0">
      <div className="relative flex h-[64px] items-center">
        <svg viewBox="0 0 1897 64" className="absolute inset-0 size-full">
          <path d="M3 0H1877Q1879 0 1880 1.500L1896.500 30Q1897.300 32 1896.500 34L1880 62.500Q1879 64 1877 64H3Q0 64 0 61V3Q0 0 3 0Z" fill="#111111" />
        </svg>
        <h2 className="relative pl-[23.500px] text-[26.400px] leading-none font-bold text-white font-['Noto_Sans_CJK_SC','Noto_Sans',sans-serif]">{title}</h2>
      </div>
      <div className="mt-[51.500px] flex gap-[44.800px]">{children}</div>
    </section>
  );
}

/* Connectors between the screens: polyline points, the last one being the arrow tip. */
const links: [number, number][][] = [
  [[645, 1184.300], [978.500, 1184.300], [978.500, 824.500], [1042, 824.500]],
  [[1772, 526.700], [2735, 526.700], [2735, 1332], [2771, 1332]],
  [[1717, 1708.600], [1855, 1708.600], [1855, 878], [1888, 878]],
  [[4443, 521.300], [5594, 521.300], [5594, 1156.700], [5629, 1156.700]],
  [[4597, 978], [4731, 978], [4731, 1173], [4757, 1173]],
  [[6365, 680.900], [6459, 680.900], [6459, 1238.300], [6504, 1238.300]],
];

function Connectors() {
  return (
    <svg viewBox="0 0 7373 2210" className="pointer-events-none absolute inset-0 size-full" fill="none" stroke="#f49b26" strokeWidth="3.700">
      {links.map((pts, i) => {
        const [x, y] = pts[pts.length - 1];
        return (
          <g key={i}>
            <polyline points={pts.map((p) => p.join(",")).join(" ")} />
            <polyline points={`${x - 15},${y - 13} ${x},${y} ${x - 15},${y + 13}`} strokeLinecap="round" strokeLinejoin="round" />
          </g>
        );
      })}
    </svg>
  );
}

export default function App() {
  return (
    <main className="relative h-[1228px] w-[4096px] overflow-hidden bg-[#575757] font-['Noto_Sans','Noto_Sans_CJK_SC',sans-serif]">
      <div className="flex gap-[176.500px] pt-[75.500px] pl-[82.900px]">
        <Flow title="收集promote">
          <IdleScreen />
          <ResultScreen />
          <AnalyzeScreen />
          <AddScreen />
        </Flow>
        <Flow title="调用promote">
          <LibraryScreen />
          <EditScreen />
          <CategoryScreen />
          <BackupScreen />
        </Flow>
      </div>
      <Connectors />
    </main>
  );
}
